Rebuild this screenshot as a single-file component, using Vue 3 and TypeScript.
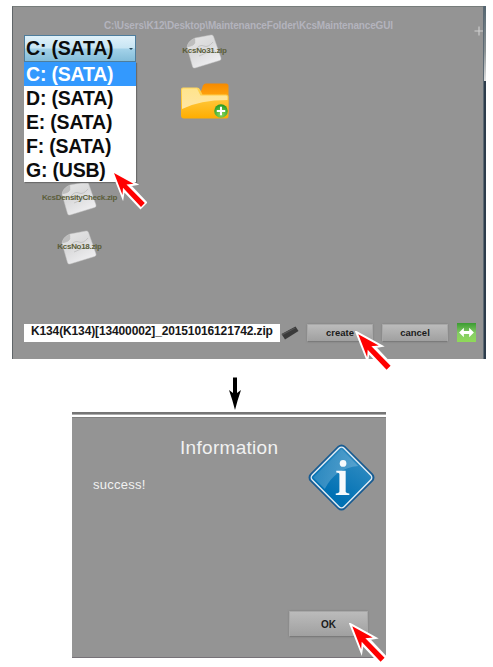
<script setup lang="ts">
import { ref } from 'vue'

interface FileEntry {
  name: string
  slot: string
}

const drives = ['C: (SATA)', 'D: (SATA)', 'E: (SATA)', 'F: (SATA)', 'G: (USB)']
const selected = ref(drives[0])
const files: FileEntry[] = [
  { name: 'KcsNo31.zip', slot: 'slot-top' },
  { name: 'KcsDensityCheck.zip', slot: 'slot-density' },
  { name: 'KcsNo18.zip', slot: 'slot-last' },
]
const pointers = ['at-usb', 'at-create', 'at-ok']
</script>

<template>
  <main class="page">
    <section class="browser">
      <header class="path"><span>C:\Users\K12\Desktop\MaintenanceFolder\KcsMaintenanceGUI</span></header>
      <svg class="plus" viewBox="0 0 10 10"><path d="M5 .5V9.500M.5 5H9.500" stroke="#d0d0d0" stroke-width="1.1" /></svg>

      <div class="files">
        <div v-for="f in files" :key="f.name" class="file" :class="f.slot">
          <svg class="sheet" viewBox="0 0 36 36">
            <defs>
              <linearGradient id="paper" x1="0" y1="0" x2=".6" y2="1">
                <stop offset="0" stop-color="#e8e8e8" />
                <stop offset=".5" stop-color="#dadadb" />
                <stop offset="1" stop-color="#efeff1" />
              </linearGradient>
            </defs>
            <path d="M1 13Q2 7 9 4L25 1Q27 .5 27.500 2.500L35 24Q35.500 26 33.500 26.500L9 34Q7 34.500 6.500 32.500Z" fill="url(#paper)" stroke="#c4c4c4" stroke-width=".5" />
            <path d="M1 13Q2 7 9 4Q10 9 7.500 11Q5 12 1 13Z" fill="#bdbdbd" />
            <path d="M2 12.500Q8 12 9 8M10 15Q14 10 18 12T27 8M13 22Q18 20 22 18T29 17" fill="none" stroke="#bcbcbd" stroke-width=".8" />
          </svg>
          <span class="name">{{ f.name }}</span>
        </div>
        <div class="file slot-folder">
          <svg class="folder" viewBox="0 0 50 36">
            <defs>
              <linearGradient id="back" x1="0" y1="0" x2="0" y2="1">
                <stop offset="0" stop-color="#f68a00" />
                <stop offset=".4" stop-color="#ffa20c" />
              </linearGradient>
              <linearGradient id="front" x1="0" y1="0" x2="0" y2="1">
                <stop offset="0" stop-color="#ffd65b" />
                <stop offset="1" stop-color="#ffad00" />
              </linearGradient>
              <linearGradient id="shine" x1="0" y1="0" x2="0" y2="1">
                <stop offset="0" stop-color="#ffe99f" />
                <stop offset="1" stop-color="#fff4d0" />
              </linearGradient>
              <radialGradient id="badge" cx=".5" cy=".75" r=".7">
                <stop offset="0" stop-color="#8ed95c" />
                <stop offset="1" stop-color="#279b25" />
              </radialGradient>
            </defs>
            <path d="M20 11L23 2.500Q24 .5 26 .5H46Q48.500 .5 48.500 3V30H20Z" fill="url(#back)" />
            <path d="M1 6.500Q1 4.500 3 4.500H17Q19 4.500 20 6.500L22.500 11.500H46Q48.500 11.500 48.500 14V33Q48.500 35.500 46 35.500H4Q1 35.500 1 32.500Z" fill="url(#front)" />
            <path d="M2 7Q2 5.500 3.500 5.500H17L20.500 12.500H46Q47.500 12.500 47.500 14V17Q20 17 2 26Z" fill="url(#shine)" opacity=".75" />
            <circle cx="41" cy="28" r="6.800" fill="url(#badge)" />
            <path d="M41 23.800V32.200M36.800 28H45.200" stroke="#fff" stroke-width="2" />
          </svg>
        </div>
      </div>

      <div class="drive-picker">
        <div class="combo"><span>{{ selected }}</span><i class="caret" /></div>
        <ul class="options">
          <li v-for="d in drives" :key="d" :class="{ active: d === selected }" @click="selected = d">{{ d }}</li>
        </ul>
      </div>

      <footer class="actions">
        <div class="filename"><span>K134(K134)[13400002]_20151016121742.zip</span></div>
        <svg class="eraser" viewBox="0 0 18 14">
          <path d="M.5 8L14.500 .5L17.500 5L4 13.500Z" fill="#3a3a3a" />
          <path d="M1 8L14 1.500L14.500 2.300L1.500 9.200Z" fill="#555" />
        </svg>
        <button class="button create">create</button>
        <button class="button cancel">cancel</button>
        <div class="swap">
          <svg viewBox="0 0 18 18"><path d="M2 9L6.500 4.500V7.500H11.500V4.500L16 9L11.500 13.500V10.500H6.500V13.500Z" fill="#fff" /></svg>
        </div>
      </footer>
      <div class="edge"><i /></div>
    </section>

    <svg class="next" viewBox="0 0 14 34"><path d="M5 .5H9V16L13 13Q9.500 23 7 33Q4.500 23 1 13L5 16Z" fill="#000" /></svg>

    <section class="dialog">
      <div class="message">
        <h1>Information</h1>
        <p>success!</p>
      </div>
      <svg class="info" viewBox="0 0 68 68">
        <defs>
          <linearGradient id="blue" x1="0" y1="0" x2=".2" y2="1">
            <stop offset="0" stop-color="#2f8bc1" />
            <stop offset="1" stop-color="#0071b4" />
          </linearGradient>
          <linearGradient id="gloss" x1="0" y1="0" x2="1" y2=".5">
            <stop offset="0" stop-color="#2d88bd" />
            <stop offset="1" stop-color="#72b2d8" />
          </linearGradient>
        </defs>
        <rect x="10.200" y="10.200" width="47.600" height="47.600" rx="5" transform="rotate(45 34 34)" fill="#175b92" />
        <rect x="12.500" y="12.500" width="43" height="43" rx="3.500" transform="rotate(45 34 34)" fill="url(#blue)" stroke="#e2edf4" stroke-width="1.400" />
        <path d="M7 34L34 7L50 23Q28 25 18 45Z" fill="url(#gloss)" opacity=".65" />
        <circle cx="35.500" cy="20.500" r="3.200" fill="#f6fafc" />
        <path d="M29 27.500H38V47.500Q38 49 41.500 49.300V50.800H28.500V49.300Q32 49 32 47.500V31Q32 29.500 29 29.300Z" fill="#f6fafc" />
      </svg>
      <button class="button ok">OK</button>
    </section>

    <svg v-for="p in pointers" :key="p" class="pointer" :class="p" viewBox="0 0 36 40">
      <path d="M2 2L24 14L18 15L34.500 32.500L29.500 37.500L12.500 19.500L11.500 26Z" fill="#fff" stroke="#fff" stroke-width="2.800" />
      <path d="M3 3L22.500 13.700L15.500 14.500L33.800 33L30 37L12 17.800L11.500 25Z" fill="#f00" />
    </svg>
  </main>
</template>

<style>
body { background: #fff; }
</style>

<style scoped>
.page {
  position: relative;
  box-sizing: border-box;
  width: 493px;
  height: 667px;
  padding: 6px 0 0 12px;
  overflow: hidden;
  background: #fff;
  font-family: "Liberation Sans", Arial, sans-serif;
}
.browser {
  position: relative;
  display: flex;
  flex-direction: column;
  box-sizing: border-box;
  width: 474px;
  height: 353px;
  background: #949494;
  border-left: 1px solid #606568;
  border-top: 1px solid #777d7b;
}
.path {
  height: 20px;
  padding: 12px 0 0 91px;
  box-sizing: border-box;
  color: #b3b3bd;
  font-size: 10px;
  line-height: 13px;
  font-weight: bold;
  white-space: nowrap;
}
.path span { letter-spacing: -.16px; }
.plus { position: absolute; left: 461px; top: 19px; width: 10px; height: 10px; }
.files {
  display: grid;
  grid-template: repeat(5, 49px) / repeat(2, 125px);
  padding-left: 4px;
}
.file { position: relative; display: flex; align-items: center; justify-content: center; }
.sheet { width: 36px; height: 36px; margin-left: -1px; }
.name {
  position: absolute;
  left: 50%;
  top: 19px;
  transform: translateX(-50%);
  color: #5b5e3b;
  font-size: 8px;
  line-height: 10px;
  font-weight: bold;
  letter-spacing: -.3px;
}
.slot-top { grid-area: 1 / 2; }
.slot-folder { grid-area: 2 / 2; }
.slot-density { grid-area: 4 / 1; }
.slot-last { grid-area: 5 / 1; }
.folder { width: 50px; height: 36px; margin: 1px 0 0 1px; }
.drive-picker {
  position: absolute;
  left: 11px;
  top: 28px;
  width: 112px;
  color: #0c0c0c;
  font-size: 19.500px;
  font-weight: bold;
  letter-spacing: -.2px;
}
.combo {
  display: flex;
  align-items: center;
  justify-content: space-between;
  box-sizing: border-box;
  height: 27px;
  padding: 0 2px 0 1px;
  border: 1px solid #4e7d9c;
  background: linear-gradient(#dff1fa, #c8e5f3 48%, #a3d2e9 52%, #84bdd9);
}
.caret { border: 2px solid transparent; border-top-color: #25485d; border-bottom: 0; }
.options {
  margin: 0;
  padding: 0;
  list-style: none;
  background: #fff;
  box-shadow: 1px 1px 1px #6b6b6b;
}
.options li { height: 24px; padding-left: 2px; line-height: 24px; }
.options .active { background: #3399fe; color: #fff; }
.actions {
  display: flex;
  align-items: center;
  height: 19px;
  margin: 51px 0 0 11px;
}
.filename {
  width: 256px;
  height: 18px;
  padding-left: 7px;
  box-sizing: border-box;
  background: #fff;
  color: #171717;
  font-size: 12px;
  line-height: 15px;
  font-weight: bold;
  letter-spacing: -.13px;
  white-space: nowrap;
}
.eraser { width: 18px; height: 14px; margin-left: 1px; }
.button {
  box-sizing: border-box;
  padding: 0;
  border: 1px solid #a8a8a8;
  border-bottom-color: #7b7b7b;
  border-radius: 1px;
  background: linear-gradient(#bbb, #a0a0a0);
  box-shadow: 0 0 2px #777;
  color: #1b1b1b;
  font: bold 9.500px "Liberation Sans", Arial, sans-serif;
}
.create, .cancel { width: 66px; height: 18px; }
.create { margin-left: 8px; }
.cancel { margin-left: 9px; }
.swap { width: 19px; height: 19px; margin-left: 9px; background: linear-gradient(#3b9b32, #86cc66 55%, #8fda58); }
.swap svg { display: block; width: 19px; height: 19px; }
.edge {
  position: absolute;
  right: 0;
  top: -1px;
  width: 2px;
  height: 353px;
  background: #2d3c4b;
  border-left: 1px solid #5c6973;
}
.edge i { display: block; height: 75px; background: linear-gradient(#536570, #8b9294 60%, #e0e0e0); }
.next { display: block; width: 14px; height: 34px; margin: 18px 0 0 216px; }
.dialog {
  position: relative;
  display: flex;
  align-items: flex-start;
  box-sizing: border-box;
  width: 314px;
  height: 246px;
  margin: 1px 0 0 60px;
  border-top: 2px solid #757575;
  border-bottom: 1px solid #777278;
  background: linear-gradient(#adadad 1px, #fff 1px, #fff 3px, #7f7f7f 3px, #7f7f7f 4px, #949494 4px);
}
.message { width: 234px; color: #f1f1f1; }
h1 {
  margin: 22px 0 0 108px;
  font-size: 19px;
  line-height: 24px;
  font-weight: normal;
  letter-spacing: .3px;
}
p { margin: 17px 0 0 21px; font-size: 13px; line-height: 16px; letter-spacing: .25px; }
.info { width: 71px; height: 71px; margin: 28px 0 0; }
.ok { position: absolute; left: 217px; bottom: 20px; width: 79px; height: 26px; font-size: 10px; }
.pointer { position: absolute; width: 36px; height: 40px; }
.at-usb { left: 111px; top: 170px; }
.at-create, .at-ok { width: 38px; height: 42px; }
.at-create { left: 355px; top: 331px; }
.at-ok { left: 349px; top: 623px; }
</style>
